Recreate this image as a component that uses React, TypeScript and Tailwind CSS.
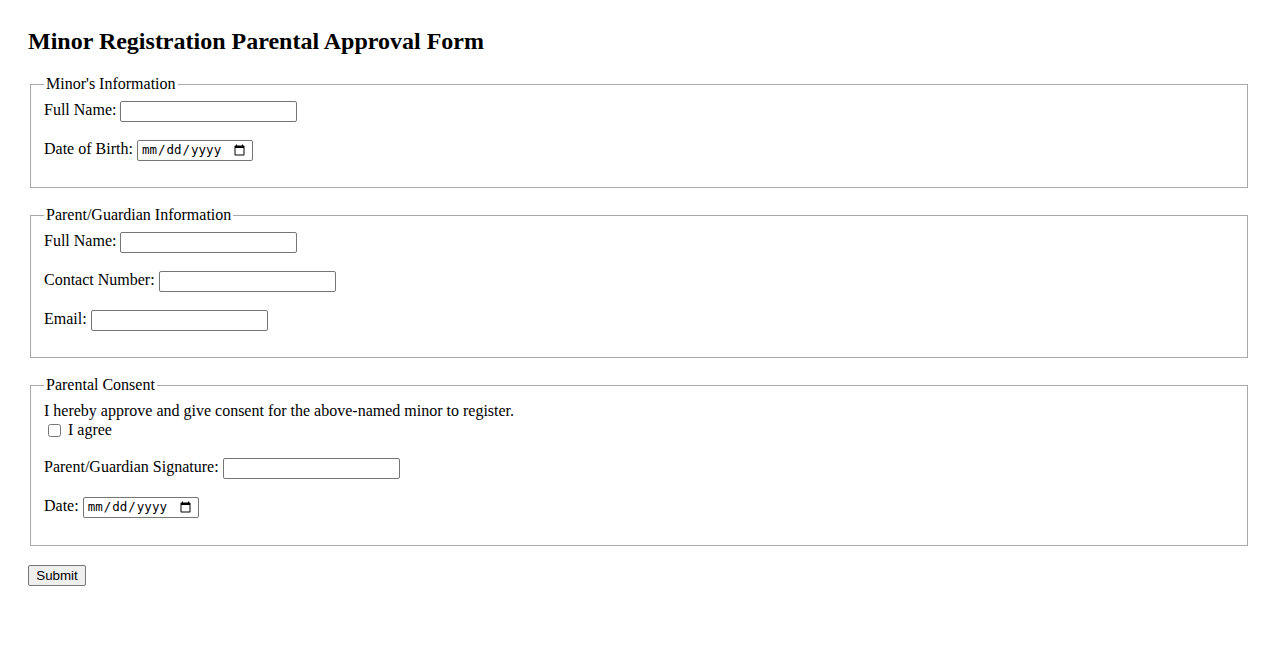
import React from "react";

const fieldsetCls =
  "mx-[2px] border border-[#a9a9a9] px-[13px] pt-[6px]";
const legendCls = "px-[2px] leading-[18px]";
const textInput =
  "w-[177px] h-[21px] align-middle border border-[#767676] rounded-[2px] px-[2px] py-[1px] bg-white font-['Liberation_Sans',Arial,sans-serif] text-[13.33px]";
const dateInput =
  "w-[116px] h-[21px] align-middle border border-[#767676] rounded-[2px] pl-[3px] pr-[4px] bg-white font-['DejaVu_Sans_Mono',monospace] text-[12.5px] text-black";

function Row({ label, children }: { label: string; children: React.ReactNode }) {
  return (
    <div className="h-[22px] leading-[22px] whitespace-nowrap">
      <label>{label}</label> {children}
    </div>
  );
}

export default function App() {
  return (
    <div className="min-h-[650px] bg-white px-[28px] pt-[28px] font-['Liberation_Serif','Times_New_Roman',serif] text-[16px] text-black">
      <h2 className="text-[24px] font-bold leading-[27px] mb-[20px]">
        Minor Registration Parental Approval Form
      </h2>
      <form>
        <fieldset className={fieldsetCls + " pb-[27px] mb-[18px]"}>
          <legend className={legendCls}>Minor's Information</legend>
          <div className="flex flex-col gap-[17px]">
            <Row label="Full Name:">
              <input type="text" className={textInput} />
            </Row>
            <Row label="Date of Birth:">
              <input type="date" className={dateInput} />
            </Row>
          </div>
        </fieldset>

        <fieldset className={fieldsetCls + " pb-[27px] mb-[18px]"}>
          <legend className={legendCls}>Parent/Guardian Information</legend>
          <div className="flex flex-col gap-[17px]">
            <Row label="Full Name:">
              <input type="text" className={textInput} />
            </Row>
            <Row label="Contact Number:">
              <input type="tel" className={textInput} />
            </Row>
            <Row label="Email:">
              <input type="email" className={textInput} />
            </Row>
          </div>
        </fieldset>

        <fieldset className={fieldsetCls + " pb-[28px] mb-[17px]"}>
          <legend className={legendCls}>Parental Consent</legend>
          <p className="mt-[1px] leading-[19px]">I hereby approve and give consent for the above-named minor to register.</p>
          <div className="h-[20px] flex items-center">
            <input type="checkbox" className="w-[13px] h-[13px] ml-[4px] mr-[3px]" />
            <span className="ml-[4px]">I agree</span>
          </div>
          <div className="flex flex-col gap-[17px] mt-[16px]">
            <Row label="Parent/Guardian Signature:">
              <input type="text" className={textInput} />
            </Row>
            <Row label="Date:">
              <input type="date" className={dateInput} />
            </Row>
          </div>
        </fieldset>

        <button
          type="submit"
          className="w-[58px] h-[21px] border border-[#767676] rounded-[2px] bg-[#efefef] font-['Liberation_Sans',Arial,sans-serif] text-[13.33px] leading-[15px]"
        >
          Submit
        </button>
      </form>
    </div>
  );
}
